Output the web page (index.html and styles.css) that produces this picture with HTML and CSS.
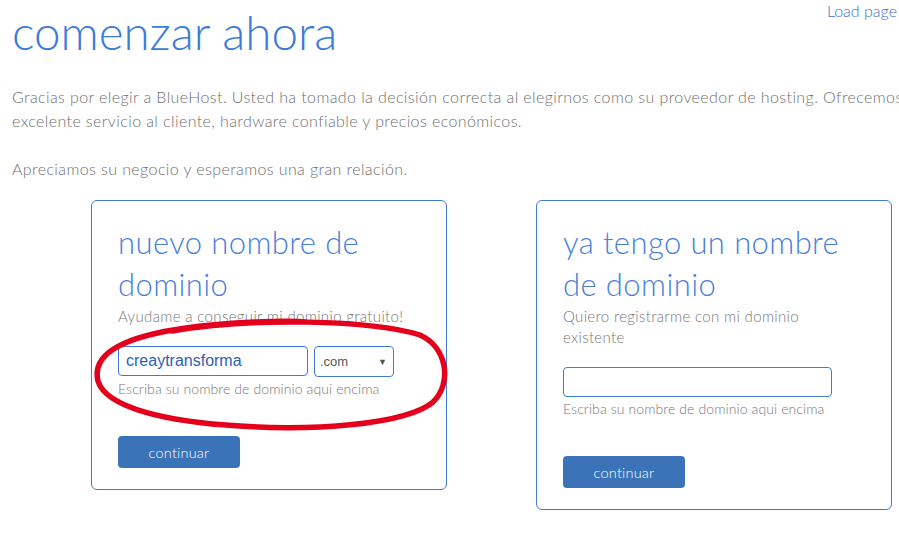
FILE: index.html
```html
<!DOCTYPE html>
<html lang="es">
<head>
    <meta charset="UTF-8">
    <meta name="viewport" content="width=device-width, initial-scale=1.0">
    <title>Comenzar ahora</title>
    <link rel="stylesheet" href="styles.css">
</head>
<body>
    <div class="page">
        <div class="header">
            <h1>comenzar ahora</h1>
            <a class="load-link" href="#">Load page</a>
        </div>
        <p class="intro">Gracias por elegir a BlueHost. Usted ha tomado la decisión correcta al elegirnos como su proveedor de hosting. Ofrecemos un<br>excelente servicio al cliente, hardware confiable y precios económicos.</p>
        <p class="intro">Apreciamos su negocio y esperamos una gran relación.</p>

        <div class="cards">
            <form class="card">
                <h2>nuevo nombre de dominio</h2>
                <p class="sub">Ayudame a conseguir mi dominio gratuito!</p>
                <div class="domain-row">
                    <input type="text" class="domain-input" value="creaytransforma">
                    <div class="tld-select">.com <span class="caret">&#9660;</span></div>
                </div>
                <p class="help">Escriba su nombre de dominio aqui encima</p>
                <button type="button">continuar</button>
            </form>

            <form class="card">
                <h2>ya tengo un nombre de dominio</h2>
                <p class="sub">Quiero registrarme con mi dominio existente</p>
                <input type="text" class="domain-input wide">
                <p class="help">Escriba su nombre de dominio aqui encima</p>
                <button type="button">continuar</button>
            </form>
        </div>

        <!-- hand drawn marker circle -->
        <svg class="marker" width="899" height="539" viewBox="0 0 899 539">
            <path d="M 172 331 C 250 317, 372 320, 420 335 C 448 348, 452 384, 433 402 C 405 425, 310 431, 240 426 C 168 422, 106 408, 98 381 C 91 352, 128 336, 186 328 C 226 322, 290 320, 306 322"
                  fill="none" stroke="#e4001c" stroke-width="5.5" stroke-linecap="round"/>
        </svg>
    </div>
</body>
</html>
```

FILE: styles.css
```css
body {
    margin: 0;
    font-family: Lato, "Open Sans", sans-serif;
    font-weight: 300;
    color: #6f6f6f;
    overflow: hidden;
}
.page {
    position: relative;
    width: 960px;
}
.header {
    display: flex;
    justify-content: space-between;
    align-items: flex-start;
    width: 897px;
}
h1 {
    margin: 0 0 0 12px;
    font-size: 47.5px;
    font-weight: 300;
    line-height: 63px;
    color: #3c7bd9;
}
.load-link {
    margin-top: 1px;
    font-size: 16px;
    color: #3d6fc6;
    text-decoration: none;
}
.intro {
    margin: 22px 0 0 12px;
    font-size: 16px;
    line-height: 24px;
    letter-spacing: 0.4px;
}
.intro + .intro {
    margin-top: 24px;
}
.cards {
    display: flex;
    align-items: flex-start;
    gap: 89px;
    margin: 19px 0 0 91px;
}
.card {
    width: 292px;
    padding: 20px 36px 21px 26px;
    border: 1px solid #3f7ad6;
    border-radius: 6px;
}
.card h2 {
    margin: 0;
    font-size: 31px;
    font-weight: 300;
    line-height: 42px;
    letter-spacing: 0.4px;
    color: #4a7fdb;
}
.sub {
    margin: 1px 0 0 0;
    font-size: 15px;
    line-height: 21px;
    letter-spacing: 0.35px;
    color: #777;
}
.domain-row {
    display: flex;
    gap: 6px;
    margin-top: 19px;
}
.domain-input {
    box-sizing: border-box;
    height: 30px;
    width: 190px;
    padding: 0 7px;
    border: 1px solid #3f7ad6;
    border-radius: 4px;
    font-family: "Liberation Sans", Arial, sans-serif;
    font-size: 16px;
    color: #2d5fb5;
}
.domain-input.wide {
    display: block;
    width: 269px;
    margin-top: 19px;
}
.tld-select {
    box-sizing: border-box;
    display: flex;
    align-items: center;
    justify-content: space-between;
    width: 80px;
    height: 31px;
    padding: 0 6px 0 5px;
    border: 1px solid #3f7ad6;
    border-radius: 4px;
    font-family: "Liberation Sans", Arial, sans-serif;
    font-size: 13px;
    color: #555;
}
.caret {
    font-size: 9px;
    color: #555;
}
.help {
    margin: 3px 0 0 0;
    font-size: 14px;
    line-height: 18px;
    letter-spacing: 0.1px;
    color: #777;
}
button {
    display: block;
    width: 122px;
    height: 32px;
    margin-top: 38px;
    border: none;
    border-radius: 4px;
    background: #3a73b7;
    color: #fff;
    font-family: Lato, "Open Sans", sans-serif;
    font-size: 14.5px;
    font-weight: 300;
    letter-spacing: 0.2px;
}
.marker {
    position: absolute;
    left: 0;
    top: 0;
    pointer-events: none;
    filter: blur(0.6px);
}
```
